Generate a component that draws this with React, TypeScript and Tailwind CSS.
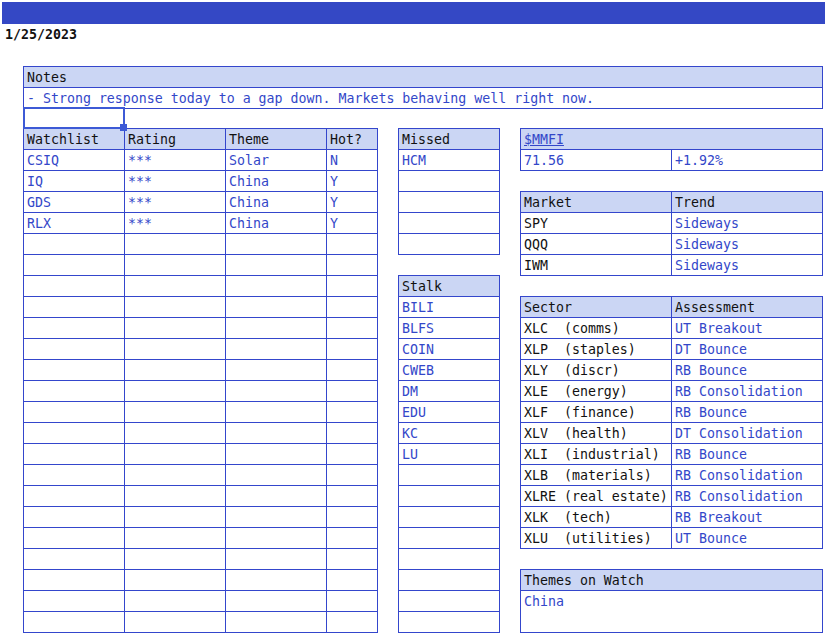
import React from "react";

type C = { t?: string; blue?: boolean; link?: boolean; span2?: boolean; rspan2?: boolean };

function Cell({ c, head }: { c: C; head?: boolean }) {
  return (
    <div
      className={[
        "border-r border-b border-[#3446cc] overflow-hidden whitespace-pre pl-[3px] pt-[1px] leading-[20px]",
        head ? "bg-[#cbd6f4]" : "",
        c.blue ? "text-[#3347c9]" : "text-[#111]",
        c.link ? "underline" : "",
        c.span2 ? "col-span-2" : "",
        c.rspan2 ? "row-span-2" : "",
      ].join(" ")}
    >
      {c.t ?? ""}
    </div>
  );
}

function Table({ cols, rows }: { cols: string; rows: C[][] }) {
  return (
    <div className={`grid w-fit auto-rows-[21px] border-l border-t border-[#3446cc] ${cols}`}>
      {rows.map((r, i) => r.map((c, j) => <Cell key={`${i}-${j}`} c={c} head={i === 0} />))}
    </div>
  );
}

const empty = (n: number, k: number): C[][] => Array.from({ length: n }, () => Array.from({ length: k }, () => ({})));

const b = (t: string): C => ({ t, blue: true });
const k = (t: string): C => ({ t });

const watch: C[][] = [
  [k("Watchlist"), k("Rating"), k("Theme"), k("Hot?")],
  [b("CSIQ"), b("***"), b("Solar"), b("N")],
  [b("IQ"), b("***"), b("China"), b("Y")],
  [b("GDS"), b("***"), b("China"), b("Y")],
  [b("RLX"), b("***"), b("China"), b("Y")],
  ...empty(19, 4),
];

const missed: C[][] = [[k("Missed")], [b("HCM")], ...empty(4, 1)];
const stalk: C[][] = [
  [k("Stalk")],
  ...["BILI", "BLFS", "COIN", "CWEB", "DM", "EDU", "KC", "LU"].map((s) => [b(s)]),
  ...empty(8, 1),
];

const mmfi: C[][] = [[{ t: "$MMFI", blue: true, link: true, span2: true }], [b("71.56"), b("+1.92%")]];
const market: C[][] = [
  [k("Market"), k("Trend")],
  [k("SPY"), b("Sideways")],
  [k("QQQ"), b("Sideways")],
  [k("IWM"), b("Sideways")],
];
const sector: C[][] = [
  [k("Sector"), k("Assessment")],
  [k("XLC  (comms)"), b("UT Breakout")],
  [k("XLP  (staples)"), b("DT Bounce")],
  [k("XLY  (discr)"), b("RB Bounce")],
  [k("XLE  (energy)"), b("RB Consolidation")],
  [k("XLF  (finance)"), b("RB Bounce")],
  [k("XLV  (health)"), b("DT Consolidation")],
  [k("XLI  (industrial)"), b("RB Bounce")],
  [k("XLB  (materials)"), b("RB Consolidation")],
  [k("XLRE (real estate)"), b("RB Consolidation")],
  [k("XLK  (tech)"), b("RB Breakout")],
  [k("XLU  (utilities)"), b("UT Bounce")],
];
const themes: C[][] = [[{ t: "Themes on Watch", span2: true }], [{ t: "China", blue: true, span2: true, rspan2: true }]];
const notes: C[][] = [[k("Notes")], [b("- Strong response today to a gap down. Markets behaving well right now.")]];

export default function App() {
  return (
    <div className="relative w-[825px] h-[636px] overflow-hidden bg-white font-['DejaVu_Sans_Mono',monospace] text-[13.28px]">
      <div className="ml-[2px] mt-[2px] h-[22px] bg-[#3448c5]" />
      <div className="h-[42px] pl-[5px] pt-[1px] leading-[20px] font-bold text-[#111]">1/25/2023</div>
      <div className="ml-[23px]">
        <Table cols="grid-cols-[799px]" rows={notes} />
      </div>
      <div className="ml-[23px] mt-[19px] flex items-start gap-[20px]">
        <Table cols="grid-cols-[101px_101px_101px_51px]" rows={watch} />
        <div className="flex flex-col gap-[20px]">
          <Table cols="grid-cols-[101px]" rows={missed} />
          <Table cols="grid-cols-[101px]" rows={stalk} />
        </div>
        <div className="flex flex-col gap-[20px]">
          <Table cols="grid-cols-[151px_151px]" rows={mmfi} />
          <Table cols="grid-cols-[151px_151px]" rows={market} />
          <Table cols="grid-cols-[151px_151px]" rows={sector} />
          <Table cols="grid-cols-[151px_151px]" rows={themes} />
        </div>
      </div>
      <div className="absolute left-[23px] top-[107px] w-[102px] h-[22px] border-2 border-[#3d5ad6]" />
      <div className="absolute left-[120px] top-[124px] w-[7px] h-[7px] bg-[#3d5ad6]" />
    </div>
  );
}
